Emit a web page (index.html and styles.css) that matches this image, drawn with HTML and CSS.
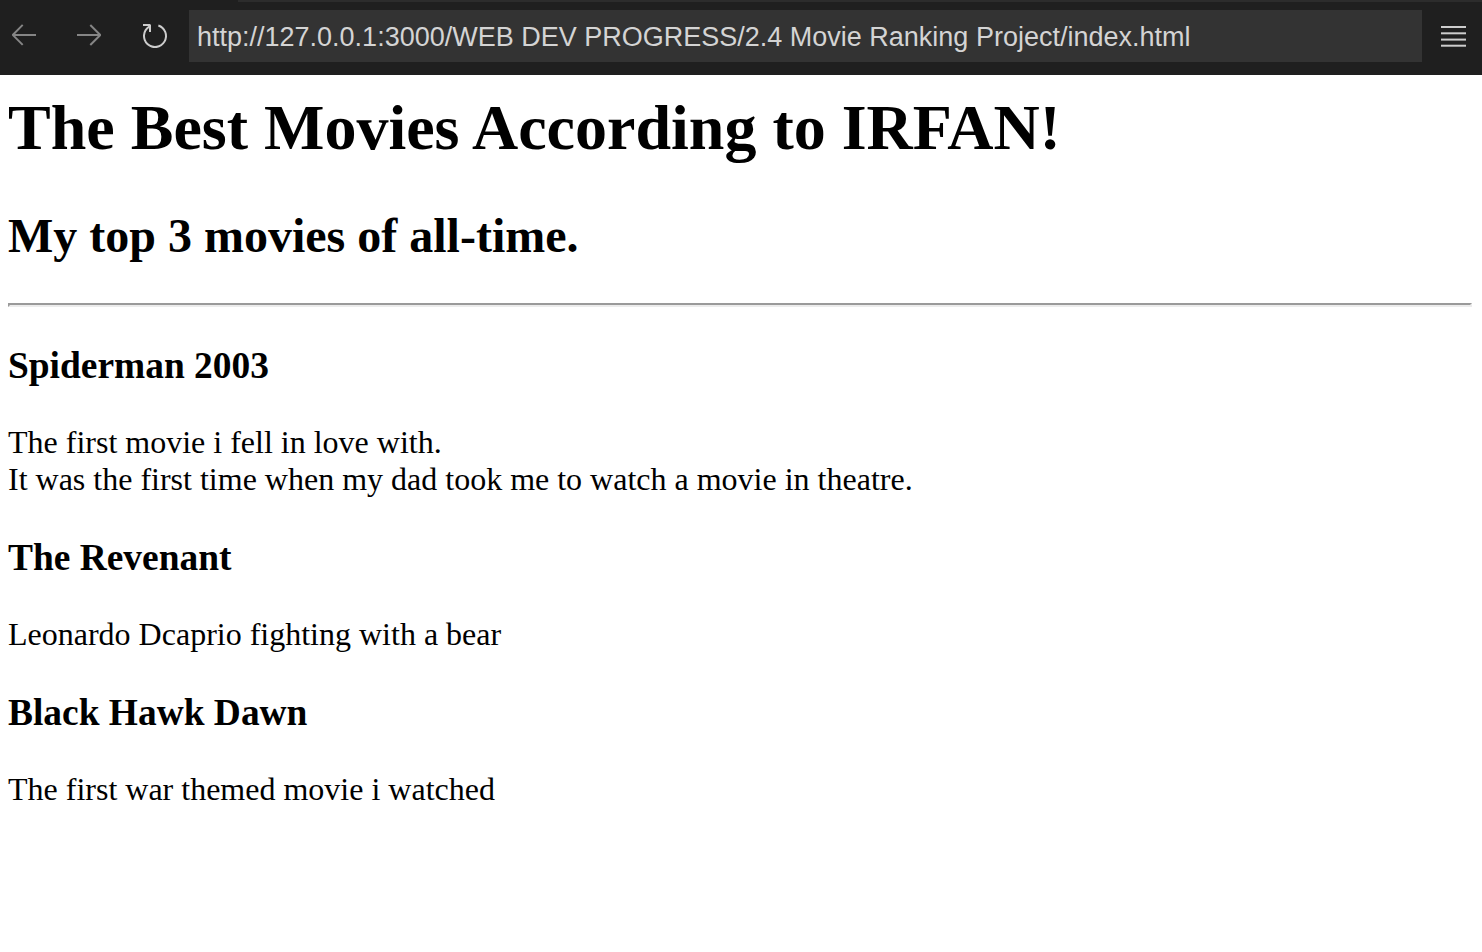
FILE: index.html
```html
<!DOCTYPE html>
<html lang="en">
<head>
<meta charset="utf-8">
<title>Movie Ranking Project</title>
<link rel="stylesheet" href="styles.css">
</head>
<body>
<header class="toolbar">
  <div class="tabline"></div>
  <div class="navrow">
    <svg class="icon icon-back" width="32" height="32" viewBox="0 0 16 16"><path fill="#858585" d="M7 3.093l-5 5V8.8l5 5 .707-.707-4.146-4.147H14v-1H3.56L7.708 3.8 7 3.093z"/></svg>
    <svg class="icon icon-fwd" width="32" height="32" viewBox="0 0 16 16"><path fill="#858585" d="M9 13.887l5-5V8.18l-5-5-.707.707 4.146 4.147H2v1h10.44L8.292 13.18l.707.707z"/></svg>
    <svg class="icon icon-reload" width="32" height="32" viewBox="0 0 16 16"><path fill="#cccccc" d="M4.681 3H2V2h3.5l.5.5V6H5V4a5 5 0 1 0 4.53-.761l.302-.954A6 6 0 1 1 4.681 3z"/></svg>
    <div class="urlbox">http://127.0.0.1:3000/WEB DEV PROGRESS/2.4 Movie Ranking Project/index.html</div>
    <svg class="icon icon-menu" width="26" height="24" viewBox="0 0 26 24"><rect x="0" y="1" width="25" height="2" fill="#cccccc"/><rect x="0" y="7.3" width="25" height="2" fill="#cccccc"/><rect x="0" y="13.6" width="25" height="2" fill="#cccccc"/><rect x="0" y="19.7" width="25" height="2" fill="#cccccc"/></svg>
  </div>
</header>
<main class="page">
  <h1 class="title">The Best Movies According to IRFAN!</h1>
  <h2 class="subtitle">My top 3 movies of all-time.</h2>
  <hr class="rule">
  <h3 class="movie">Spiderman 2003</h3>
  <p class="desc">The first movie i fell in love with.<br>It was the first time when my dad took me to watch a movie in theatre.</p>
  <h3 class="movie">The Revenant</h3>
  <p class="desc">Leonardo Dcaprio fighting with a bear</p>
  <h3 class="movie">Black Hawk Dawn</h3>
  <p class="desc">The first war themed movie i watched</p>
</main>
</body>
</html>
```
FILE: styles.css
```css
html, body {
  margin: 0;
  padding: 0;
  background: #ffffff;
}

body {
  font-family: "Liberation Serif", "Times New Roman", serif;
  color: #000000;
}

.toolbar {
  background: #1f1f1f;
  height: 75px;
  display: flex;
  flex-direction: column;
}

.tabline {
  height: 2px;
  margin-left: 238px;
  background: #2c2c2c;
}

.navrow {
  height: 73px;
  display: flex;
  align-items: flex-start;
}

.icon {
  display: block;
  flex: none;
}

.icon-back {
  margin-left: 8px;
  margin-top: 16px;
}

.icon-fwd {
  margin-left: 33px;
  margin-top: 16px;
}

.icon-reload {
  margin-left: 34px;
  margin-top: 18px;
}

.urlbox {
  margin-left: 18px;
  margin-top: 8px;
  width: 1233px;
  height: 52px;
  box-sizing: border-box;
  padding-left: 8px;
  background: #333333;
  color: #d4d4d4;
  font-family: "Liberation Sans", Arial, sans-serif;
  font-size: 27px;
  line-height: 54px;
  white-space: nowrap;
  overflow: hidden;
}

.icon-menu {
  margin-left: 19px;
  margin-top: 23px;
}

.page {
  padding: 0 10px 0 8px;
  overflow: hidden;
}

.title {
  font-size: 64px;
  font-weight: bold;
  margin: 16px 0 42.5px;
}

.subtitle {
  font-size: 48px;
  font-weight: bold;
  margin: 0 0 40px;
}

.rule {
  height: 0;
  margin: 0 0 16px;
  border-style: solid;
  border-width: 2px;
  border-color: #9a9a9a #ececec #ececec #9a9a9a;
}

.movie {
  font-size: 37.44px;
  font-weight: bold;
  margin: 37.44px 0;
}

.desc {
  font-size: 32px;
  margin: 32px 0;
}
```
